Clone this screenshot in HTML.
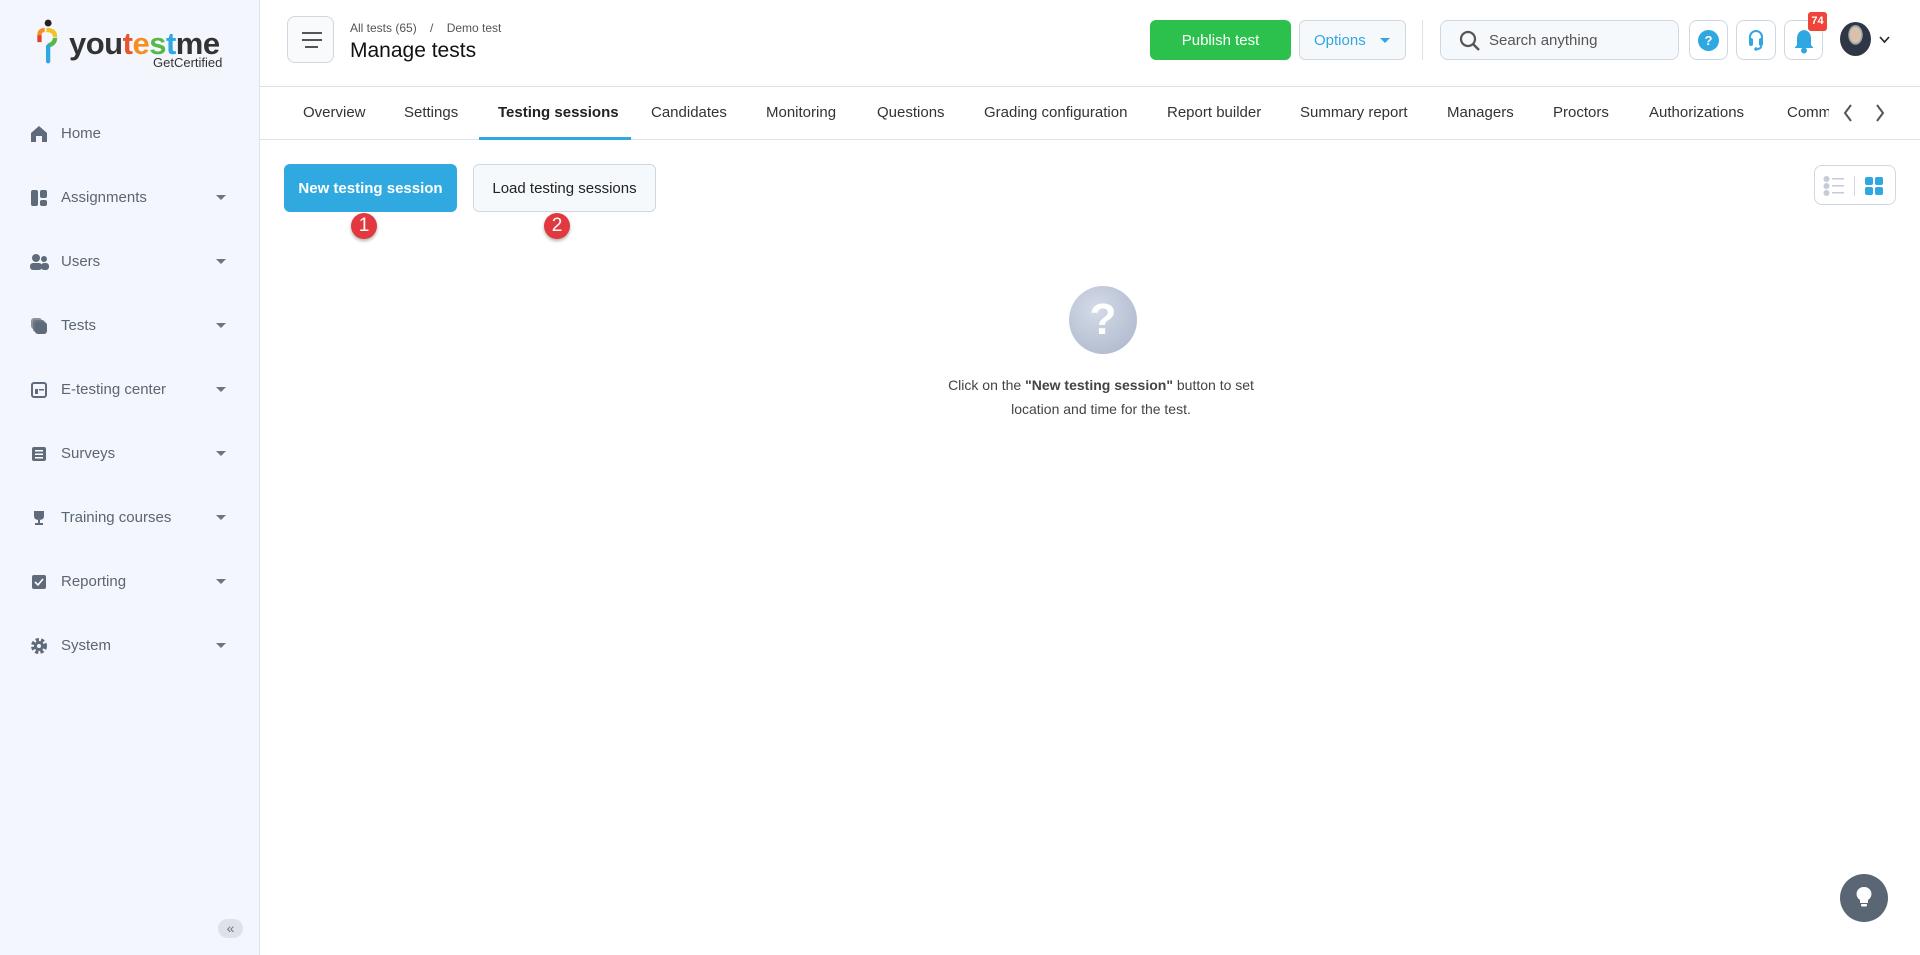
<!DOCTYPE html>
<html><head><meta charset="utf-8"><style>
*{box-sizing:border-box;margin:0;padding:0}
body{width:1920px;height:955px;overflow:hidden;font-family:"Liberation Sans",sans-serif;background:#fff;position:relative;color:#222}
.sb{position:absolute;left:0;top:0;width:260px;height:955px;background:#f3f7fd;border-right:1px solid #dde3ea}
.it{position:absolute;left:0;width:260px;height:24px;font-size:15px;color:#5c6573}
.it svg{position:absolute;left:30px;top:3px}
.it span{position:absolute;left:61px;top:3px}
.it i{position:absolute;left:216px;top:9px;border-left:5px solid transparent;border-right:5px solid transparent;border-top:5px solid #6b7480}
.a{position:absolute}
.tab{position:absolute;top:104px;font-size:15px;color:#333}
.btn{position:absolute;border-radius:6px;font-size:15px;display:flex;align-items:center;justify-content:center}
.ib{position:absolute;top:20px;width:39px;height:40px;border:1px solid #cfd8e2;border-radius:8px;background:#fff}
.bd{position:absolute;top:213px;width:26px;height:26px;border-radius:50%;background:#e1393f;color:#fff;font-size:19px;text-align:center;line-height:26px;box-shadow:0 2px 3px rgba(0,0,0,.3)}
</style></head><body>
<div class="sb">
 <div class="a" style="left:36px;top:18px">
  <svg width="26" height="50" viewBox="0 0 30 54"><circle cx="14" cy="4" r="4" fill="#222"/><path d="M4 18 Q4 12 10 12" stroke="#f29122" stroke-width="5" fill="none"/><path d="M12 12 Q22 12 22 20" stroke="#f4c21e" stroke-width="5" fill="none"/><path d="M22 21 Q22 28 14 30" stroke="#56b947" stroke-width="5" fill="none"/><path d="M4 18 L4 26" stroke="#e4412c" stroke-width="5"/><path d="M14 31 L14 48" stroke="#2fa7e0" stroke-width="5" stroke-linecap="round"/></svg>
 </div>
 <div class="a" style="left:69px;top:28px;font-size:31px;font-weight:bold;letter-spacing:-0.5px;color:#333;line-height:31px">you<span style="color:#e4572e">t</span><span style="color:#f29122">e</span><span style="color:#56b947">s</span><span style="color:#2fa7e0">t</span>me</div>
 <div class="a" style="left:153px;top:55px;font-size:13px;color:#333">GetCertified</div>
 <div class="it" style="top:122px"><svg width="18" height="18" viewBox="0 0 18 18"><path d="M1 8 L9 1 L17 8 V17 H12 V11 H6 V17 H1Z" fill="#5f6b7a"/></svg><span>Home</span></div>
 <div class="it" style="top:186px"><svg width="18" height="18"><rect x="1" y="1" width="7" height="16" rx="2" fill="#5f6b7a"/><rect x="10" y="1" width="7" height="8" rx="2" fill="#5f6b7a"/><rect x="10" y="11" width="7" height="6" rx="2" fill="#5f6b7a"/></svg><span>Assignments</span><i></i></div>
 <div class="it" style="top:250px"><svg width="20" height="18"><circle cx="6" cy="5" r="4" fill="#5f6b7a"/><circle cx="14" cy="6" r="3" fill="#5f6b7a"/><rect x="0" y="10" width="12" height="7" rx="3" fill="#5f6b7a"/><rect x="11" y="10" width="8" height="7" rx="3" fill="#5f6b7a"/></svg><span>Users</span><i></i></div>
 <div class="it" style="top:314px"><svg width="18" height="18"><rect x="1" y="1" width="11" height="11" rx="3" fill="#8a939e"/><rect x="3" y="3" width="12" height="12" rx="3" fill="#6b7480"/><rect x="5" y="5" width="12" height="12" rx="3" fill="#5f6b7a"/></svg><span>Tests</span><i></i></div>
 <div class="it" style="top:378px"><svg width="18" height="18"><rect x="2" y="2" width="14" height="14" rx="2" fill="none" stroke="#5f6b7a" stroke-width="2"/><rect x="5" y="8" width="3" height="5" fill="#5f6b7a"/><rect x="9" y="8" width="5" height="1.5" fill="#5f6b7a"/></svg><span>E-testing center</span><i></i></div>
 <div class="it" style="top:442px"><svg width="18" height="18"><rect x="2" y="2" width="14" height="14" rx="2" fill="#5f6b7a"/><rect x="5" y="5" width="8" height="1.5" fill="#fff"/><rect x="5" y="8.5" width="8" height="1.5" fill="#fff"/><rect x="5" y="12" width="8" height="1.5" fill="#fff"/></svg><span>Surveys</span><i></i></div>
 <div class="it" style="top:506px"><svg width="18" height="18"><path d="M4 2 H14 V7 Q14 11 9 11 Q4 11 4 7Z M8 11 H10 V14 H8Z M5 14 H13 V16 H5Z" fill="#5f6b7a"/></svg><span>Training courses</span><i></i></div>
 <div class="it" style="top:570px"><svg width="18" height="18"><rect x="2" y="2" width="14" height="14" rx="2" fill="#5f6b7a"/><path d="M5 9 L8 12 L13 6" stroke="#fff" stroke-width="1.6" fill="none"/></svg><span>Reporting</span><i></i></div>
 <div class="it" style="top:634px"><svg width="18" height="18"><circle cx="9" cy="9" r="6" fill="none" stroke="#5f6b7a" stroke-width="4" stroke-dasharray="3 2"/><circle cx="9" cy="9" r="5" fill="#5f6b7a"/><circle cx="9" cy="9" r="2" fill="#f3f7fd"/></svg><span>System</span><i></i></div>
 <div class="a" style="left:218px;top:919px;width:25px;height:19px;border-radius:10px;background:#dde2e8;color:#6b7480;font-size:14px;text-align:center;line-height:18px">«</div>
</div>
<!-- header -->
<div class="a" style="left:260px;top:0;width:1660px;height:87px;border-bottom:1px solid #dde3ea"></div>
<div class="a" style="left:287px;top:16px;width:47px;height:47px;border:1px solid #cfd8e2;border-radius:8px;background:#f8fafc"><div style="position:absolute;left:14px;top:15px;width:20px;height:2px;background:#555"></div><div style="position:absolute;left:14px;top:22px;width:20px;height:2px;background:#555"></div><div style="position:absolute;left:17px;top:29px;width:13px;height:2px;background:#555"></div></div>
<div class="a" style="left:350px;top:21px;font-size:12px;color:#555">All tests (65) &nbsp;&nbsp;&nbsp;/&nbsp;&nbsp;&nbsp; Demo test</div>
<div class="a" style="left:350px;top:39px;font-size:21px;color:#111">Manage tests</div>
<div class="btn" style="left:1150px;top:20px;width:141px;height:40px;background:#2cc14d;color:#fff;font-size:15px">Publish test</div>
<div class="btn" style="left:1299px;top:20px;width:107px;height:40px;background:#f6f9fc;border:1px solid #cfd8e2;color:#2fa7e0;font-size:15px;justify-content:flex-start;padding-left:14px">Options<span style="margin-left:14px;border-left:5px solid transparent;border-right:5px solid transparent;border-top:5px solid #2fa7e0"></span></div>
<div class="a" style="left:1422px;top:20px;width:1px;height:40px;background:#dde3ea"></div>
<div class="a" style="left:1440px;top:20px;width:239px;height:40px;border:1px solid #cfd8e2;border-radius:8px;background:#f6f9fc"><svg style="position:absolute;left:18px;top:9px" width="22" height="22"><circle cx="9" cy="9" r="7" fill="none" stroke="#555" stroke-width="2.2"/><path d="M14 14 L20 20" stroke="#555" stroke-width="2.4"/></svg><span style="position:absolute;left:48px;top:11px;font-size:15px;color:#555">Search anything</span></div>
<div class="ib" style="left:1689px"><div style="position:absolute;left:8px;top:9px;width:21px;height:21px;border-radius:50%;background:#2fa7e0;color:#fff;font-size:13px;font-weight:bold;text-align:center;line-height:21px">?</div></div>
<div class="ib" style="left:1736px;width:40px"><svg style="position:absolute;left:10px;top:8px" width="18" height="24"><path d="M3 11 V8 A6 6 0 0 1 15 8 V11" stroke="#2fa7e0" stroke-width="2" fill="none"/><rect x="2" y="9" width="4" height="8" rx="2" fill="#2fa7e0"/><rect x="12" y="9" width="4" height="8" rx="2" fill="#2fa7e0"/><path d="M14 17 Q14 20 10 20" stroke="#2fa7e0" stroke-width="2" fill="none"/><circle cx="9" cy="20" r="1.8" fill="#2fa7e0"/></svg></div>
<div class="ib" style="left:1784px"><svg style="position:absolute;left:8px;top:7px" width="22" height="26"><path d="M11 2 Q4 3 4 11 V17 L1.5 20 H20.5 L18 17 V11 Q18 3 11 2Z" fill="#2fa7e0"/><circle cx="11" cy="22.5" r="3" fill="#2fa7e0"/></svg></div>
<div class="a" style="left:1808px;top:12px;width:19px;height:19px;border-radius:3px;background:#f0433a;color:#fff;font-size:11px;font-weight:bold;text-align:center;line-height:19px">74</div>
<div class="a" style="left:1840px;top:22px;width:31px;height:34px;border-radius:50%;background:radial-gradient(ellipse at 50% 38%,#dcc0ab 0 26%,#9aa 27% 32%,#2f3646 34%);overflow:hidden"></div>
<svg class="a" style="left:1879px;top:36px" width="11" height="8"><path d="M1 1 L5.5 6 L10 1" stroke="#222" stroke-width="1.6" fill="none"/></svg>
<!-- tabs -->
<div class="a" style="left:260px;top:139px;width:1660px;height:1px;background:#dde3ea"></div>
<div class="tab" style="left:303px">Overview</div>
<div class="tab" style="left:404px">Settings</div>
<div class="tab" style="left:498px;font-weight:bold;color:#222">Testing sessions</div>
<div class="a" style="left:479px;top:137px;width:152px;height:3px;background:#2fa7e0"></div>
<div class="tab" style="left:651px">Candidates</div>
<div class="tab" style="left:766px">Monitoring</div>
<div class="tab" style="left:877px">Questions</div>
<div class="tab" style="left:984px">Grading configuration</div>
<div class="tab" style="left:1167px">Report builder</div>
<div class="tab" style="left:1300px">Summary report</div>
<div class="tab" style="left:1447px">Managers</div>
<div class="tab" style="left:1553px">Proctors</div>
<div class="tab" style="left:1649px">Authorizations</div>
<div class="tab" style="left:1787px;width:42px;overflow:hidden;white-space:nowrap">Comments</div>
<svg class="a" style="left:1842px;top:103px" width="12" height="20"><path d="M9 2 L3 10 L9 18" stroke="#555" stroke-width="2" fill="none"/></svg>
<svg class="a" style="left:1874px;top:103px" width="12" height="20"><path d="M3 2 L9 10 L3 18" stroke="#555" stroke-width="2" fill="none"/></svg>
<!-- content -->
<div class="btn" style="left:284px;top:164px;width:173px;height:48px;background:#2fa9df;color:#fff;font-weight:bold">New testing session</div>
<div class="btn" style="left:473px;top:164px;width:183px;height:48px;background:#f6f9fc;border:1px solid #cfd8e2;color:#222">Load testing sessions</div>
<div class="bd" style="left:351px">1</div>
<div class="bd" style="left:544px">2</div>
<div class="a" style="left:1814px;top:165px;width:82px;height:40px;border:1px solid #cfd8e2;border-radius:8px"><svg style="position:absolute;left:8px;top:10px" width="68" height="20"><circle cx="3.5" cy="3" r="3" fill="#c5ccd5"/><circle cx="3.5" cy="10" r="3" fill="#c5ccd5"/><circle cx="3.5" cy="17" r="3" fill="#c5ccd5"/><rect x="9" y="2" width="12" height="1.5" fill="#c5ccd5"/><rect x="9" y="9" width="12" height="1.5" fill="#c5ccd5"/><rect x="9" y="16" width="12" height="1.5" fill="#c5ccd5"/><rect x="31" y="-2" width="1" height="24" fill="#cfd8e2"/><rect x="42" y="1" width="8" height="8" rx="2" fill="#2fa7e0"/><rect x="52" y="1" width="8" height="8" rx="2" fill="#2fa7e0"/><rect x="42" y="11" width="8" height="8" rx="2" fill="#2fa7e0"/><rect x="52" y="11" width="8" height="8" rx="2" fill="#2fa7e0"/></svg></div>
<div class="a" style="left:1069px;top:286px;width:68px;height:68px;border-radius:50%;background:radial-gradient(circle at 40% 35%,#d4dbe8,#a9b4c8);color:#fff;font-size:44px;font-weight:bold;text-align:center;line-height:68px">?</div>
<div class="a" style="left:900px;top:373px;width:402px;text-align:center;font-size:14px;color:#444;line-height:24px">Click on the <b>"New testing session"</b> button to set<br>location and time for the test.</div>
<div class="a" style="left:1840px;top:874px;width:48px;height:48px;border-radius:50%;background:#5a6673"><svg style="position:absolute;left:15px;top:12px" width="18" height="24"><path d="M9 1 A7 7 0 0 1 13 14 V17 H5 V14 A7 7 0 0 1 9 1Z" fill="#fff"/><rect x="6" y="18" width="6" height="2.5" rx="1" fill="#fff"/></svg></div>
</body></html>
